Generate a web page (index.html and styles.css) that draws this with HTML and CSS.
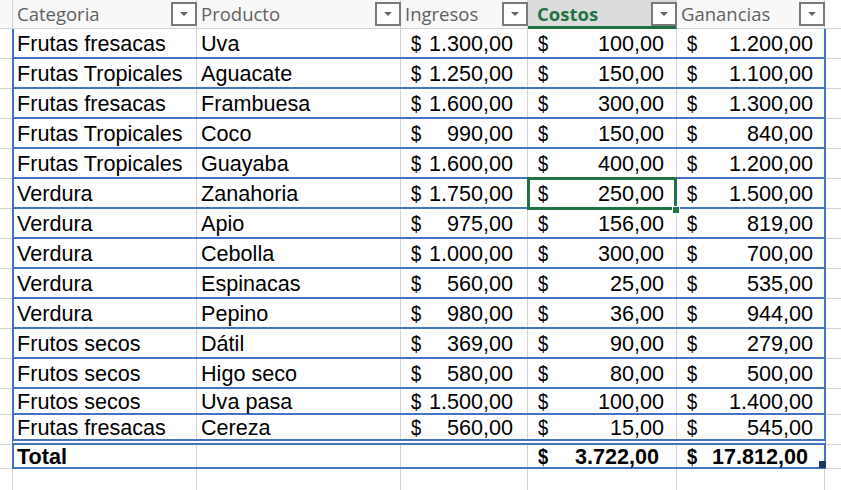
FILE: index.html
```html
<!DOCTYPE html>
<html lang="es">
<head>
<meta charset="utf-8">
<title>Tabla</title>
<link rel="stylesheet" href="styles.css">
</head>
<body>
<div class="sheet">
  <div class="hrow">
    <div class="gut-h"></div>
    <div class="hc ca"><span class="ht">Categoria</span><span class="fbtn"><i class="tri"></i></span></div>
    <div class="hc cb"><span class="ht">Producto</span><span class="fbtn"><i class="tri"></i></span></div>
    <div class="hc cc"><span class="ht">Ingresos</span><span class="fbtn"><i class="tri"></i></span></div>
    <div class="hc cd hsel"><span class="ht">Costos</span><span class="fbtn"><i class="tri"></i></span></div>
    <div class="hc ce"><span class="ht">Ganancias</span><span class="fbtn"><i class="tri"></i></span></div>
    <div class="hfill"></div>
  </div>

  <div class="row"><div class="gut"></div><div class="trow"><div class="c ca">Frutas fresacas</div><div class="c cb">Uva</div><div class="c cc num"><span class="cur">$</span><span>1.300,00</span></div><div class="c cd num"><span class="cur">$</span><span>100,00</span></div><div class="c ce num"><span class="cur">$</span><span>1.200,00</span></div></div><div class="fill"></div></div>
  <div class="row"><div class="gut"></div><div class="trow"><div class="c ca">Frutas Tropicales</div><div class="c cb">Aguacate</div><div class="c cc num"><span class="cur">$</span><span>1.250,00</span></div><div class="c cd num"><span class="cur">$</span><span>150,00</span></div><div class="c ce num"><span class="cur">$</span><span>1.100,00</span></div></div><div class="fill"></div></div>
  <div class="row"><div class="gut"></div><div class="trow"><div class="c ca">Frutas fresacas</div><div class="c cb">Frambuesa</div><div class="c cc num"><span class="cur">$</span><span>1.600,00</span></div><div class="c cd num"><span class="cur">$</span><span>300,00</span></div><div class="c ce num"><span class="cur">$</span><span>1.300,00</span></div></div><div class="fill"></div></div>
  <div class="row"><div class="gut"></div><div class="trow"><div class="c ca">Frutas Tropicales</div><div class="c cb">Coco</div><div class="c cc num"><span class="cur">$</span><span>990,00</span></div><div class="c cd num"><span class="cur">$</span><span>150,00</span></div><div class="c ce num"><span class="cur">$</span><span>840,00</span></div></div><div class="fill"></div></div>
  <div class="row"><div class="gut"></div><div class="trow"><div class="c ca">Frutas Tropicales</div><div class="c cb">Guayaba</div><div class="c cc num"><span class="cur">$</span><span>1.600,00</span></div><div class="c cd num"><span class="cur">$</span><span>400,00</span></div><div class="c ce num"><span class="cur">$</span><span>1.200,00</span></div></div><div class="fill"></div></div>
  <div class="row"><div class="gut"></div><div class="trow"><div class="c ca">Verdura</div><div class="c cb">Zanahoria</div><div class="c cc num"><span class="cur">$</span><span>1.750,00</span></div><div class="c cd num active"><span class="cur">$</span><span>250,00</span></div><div class="c ce num"><span class="cur">$</span><span>1.500,00</span></div></div><div class="fill"></div></div>
  <div class="row"><div class="gut"></div><div class="trow"><div class="c ca">Verdura</div><div class="c cb">Apio</div><div class="c cc num"><span class="cur">$</span><span>975,00</span></div><div class="c cd num"><span class="cur">$</span><span>156,00</span></div><div class="c ce num"><span class="cur">$</span><span>819,00</span></div></div><div class="fill"></div></div>
  <div class="row"><div class="gut"></div><div class="trow"><div class="c ca">Verdura</div><div class="c cb">Cebolla</div><div class="c cc num"><span class="cur">$</span><span>1.000,00</span></div><div class="c cd num"><span class="cur">$</span><span>300,00</span></div><div class="c ce num"><span class="cur">$</span><span>700,00</span></div></div><div class="fill"></div></div>
  <div class="row"><div class="gut"></div><div class="trow"><div class="c ca">Verdura</div><div class="c cb">Espinacas</div><div class="c cc num"><span class="cur">$</span><span>560,00</span></div><div class="c cd num"><span class="cur">$</span><span>25,00</span></div><div class="c ce num"><span class="cur">$</span><span>535,00</span></div></div><div class="fill"></div></div>
  <div class="row"><div class="gut"></div><div class="trow"><div class="c ca">Verdura</div><div class="c cb">Pepino</div><div class="c cc num"><span class="cur">$</span><span>980,00</span></div><div class="c cd num"><span class="cur">$</span><span>36,00</span></div><div class="c ce num"><span class="cur">$</span><span>944,00</span></div></div><div class="fill"></div></div>
  <div class="row"><div class="gut"></div><div class="trow"><div class="c ca">Frutos secos</div><div class="c cb">Dátil</div><div class="c cc num"><span class="cur">$</span><span>369,00</span></div><div class="c cd num"><span class="cur">$</span><span>90,00</span></div><div class="c ce num"><span class="cur">$</span><span>279,00</span></div></div><div class="fill"></div></div>
  <div class="row"><div class="gut"></div><div class="trow"><div class="c ca">Frutos secos</div><div class="c cb">Higo seco</div><div class="c cc num"><span class="cur">$</span><span>580,00</span></div><div class="c cd num"><span class="cur">$</span><span>80,00</span></div><div class="c ce num"><span class="cur">$</span><span>500,00</span></div></div><div class="fill"></div></div>
  <div class="row short"><div class="gut"></div><div class="trow"><div class="c ca">Frutos secos</div><div class="c cb">Uva pasa</div><div class="c cc num"><span class="cur">$</span><span>1.500,00</span></div><div class="c cd num"><span class="cur">$</span><span>100,00</span></div><div class="c ce num"><span class="cur">$</span><span>1.400,00</span></div></div><div class="fill"></div></div>
  <div class="row last"><div class="gut"></div><div class="trow"><div class="c ca">Frutas fresacas</div><div class="c cb">Cereza</div><div class="c cc num"><span class="cur">$</span><span>560,00</span></div><div class="c cd num"><span class="cur">$</span><span>15,00</span></div><div class="c ce num"><span class="cur">$</span><span>545,00</span></div></div><div class="fill"></div></div>
  <div class="row total"><div class="gut"></div><div class="trow"><div class="c ca">Total</div><div class="c cb"></div><div class="c cc"></div><div class="c cd num"><span class="cur">$</span><span>3.722,00</span></div><div class="c ce num grip"><span class="cur">$</span><span>17.812,00</span></div></div><div class="fill"></div></div>

  <div class="erow">
    <div class="gut-h"></div>
    <div class="ec ca"></div>
    <div class="ec cb"></div>
    <div class="ec cc"></div>
    <div class="ec cd"></div>
    <div class="ec ce"></div>
    <div class="efill"></div>
  </div>
</div>
</body>
</html>
```

FILE: styles.css
```css
html, body {
  margin: 0;
  padding: 0;
  background: #ffffff;
  overflow: hidden;
}

.sheet {
  width: 841px;
  height: 490px;
  overflow: hidden;
  font-family: "Liberation Sans", Arial, sans-serif;
  color: #000000;
}

/* header row (table headings shown in place of column letters) */
.hrow {
  display: flex;
  height: 29px;
  background: #f8f8f8;
}

.gut-h {
  width: 13px;
  flex: none;
  box-sizing: border-box;
  border-right: 1px solid #d4d4d4;
  border-bottom: 1px solid #d4d4d4;
}

.hc {
  flex: none;
  box-sizing: border-box;
  display: flex;
  align-items: center;
  justify-content: space-between;
  padding-left: 4px;
  border-right: 1px solid #d4d4d4;
  border-bottom: 1px solid #d4d4d4;
  font-family: "Open Sans", "Noto Sans", sans-serif;
  font-size: 18.5px;
  color: #616161;
}

.hc.ca { width: 184px; }
.hc.cb { width: 204px; }
.hc.cc { width: 127px; }
.hc.cd { width: 149px; }
.hc.ce { width: 148px; }

.hsel {
  background: #dcdcdc;
  border-bottom: 3px solid #217346;
  padding-left: 9px;
}

.hsel .ht {
  color: #217346;
  font-weight: 700;
}

.ht {
  white-space: nowrap;
  line-height: 1;
  margin-top: 1px;
}

.hsel .ht {
  margin-top: 3px;
}

.fbtn {
  width: 26px;
  height: 24px;
  box-sizing: border-box;
  border: 2px solid #7a7a7a;
  background: #ffffff;
  display: flex;
  align-items: center;
  justify-content: center;
  margin-right: -1px;
  flex: none;
}

.hsel .fbtn {
  margin-top: 2px;
}

.tri {
  width: 0;
  height: 0;
  border-left: 4px solid transparent;
  border-right: 4px solid transparent;
  border-top: 4px solid #666666;
}

.hfill {
  flex: 1;
  border-bottom: 1px solid #d4d4d4;
  background: #ffffff;
}

/* data rows */
.row {
  display: flex;
  height: 30px;
}

.row.short { height: 26px; }
.row.last { height: 30px; }
.row.total { height: 24px; }

.gut {
  width: 12px;
  flex: none;
  box-sizing: border-box;
  border-bottom: 1px solid #d4d4d4;
}

.fill {
  flex: 1;
  box-sizing: border-box;
  border-bottom: 1px solid #d4d4d4;
}

.trow {
  width: 814px;
  flex: none;
  box-sizing: border-box;
  display: flex;
  border-left: 2px solid #4472c4;
  border-right: 2px solid #4472c4;
  border-bottom: 2px solid #4472c4;
}

.row.last .trow {
  border-bottom: 6px double #4472c4;
}

.c {
  flex: none;
  box-sizing: border-box;
  display: flex;
  align-items: center;
  white-space: nowrap;
  font-size: 21.6px;
  line-height: 20px;
  padding-left: 3px;
  padding-top: 2px;
  border-right: 1px solid #d4d4d4;
}

.c.ca { width: 183px; }
.c.cb { width: 204px; padding-left: 4px; }
.c.cc { width: 127px; }
.c.cd { width: 149px; }
.c.ce { width: 147px; border-right: none; }

.num {
  justify-content: space-between;
  padding-left: 10px;
}

.cur {
  display: inline-block;
  transform: scaleX(0.85);
  transform-origin: left center;
}

.c.cc.num { padding-right: 14px; }
.c.cd.num { padding-right: 12px; }
.c.ce.num { padding-right: 11px; }

.total .c {
  font-weight: 700;
  padding-top: 1px;
}

.total .c.cd.num { padding-right: 17px; }
.total .c.ce.num { padding-right: 16px; }

/* active cell selection */
.active {
  position: relative;
}

.active::after {
  content: "";
  position: absolute;
  left: -1px;
  top: -2px;
  right: -1px;
  bottom: -3px;
  border: 3px solid #217346;
  z-index: 2;
}

.active::before {
  content: "";
  position: absolute;
  right: -4px;
  bottom: -7px;
  width: 6px;
  height: 6px;
  background: #217346;
  border: 1px solid #ffffff;
  z-index: 3;
}

/* table resize grip */
.grip {
  position: relative;
}

.grip::after {
  content: "";
  position: absolute;
  right: -2px;
  bottom: -1px;
  width: 7px;
  height: 7px;
  background: #1f3864;
}

/* empty row below */
.erow {
  display: flex;
  height: 30px;
}

.ec {
  flex: none;
  box-sizing: border-box;
  border-right: 1px solid #d4d4d4;
}

.ec.ca { width: 184px; }
.ec.cb { width: 204px; }
.ec.cc { width: 127px; }
.ec.cd { width: 149px; }
.ec.ce { width: 148px; }

.efill { flex: 1; }
```
